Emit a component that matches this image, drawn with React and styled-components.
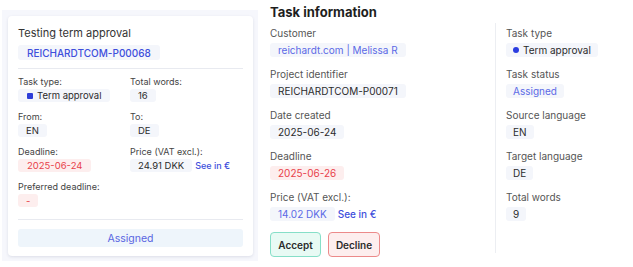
import React from "react";
import styled, { createGlobalStyle } from "styled-components";

const GlobalStyle = createGlobalStyle`
  body {
    margin: 0;
    background: #fff;
    font-family: "Inter", "Noto Sans", sans-serif;
    color: #2b2b2b;
  }
`;

const Page = styled.div`
  width: 633px;
  height: 267px;
  display: flex;
  align-items: flex-start;
  padding: 10px 0 0 2px;
  box-sizing: border-box;
`;

const Backdrop = styled.div`
  width: 256px;
  height: 251px;
  background: #f6f7fc;
  padding: 6px 5px 5px 6px;
  box-sizing: border-box;
`;

const Card = styled.div`
  height: 100%;
  background: #fff;
  border-radius: 4px;
  box-shadow: 0 1px 3px rgba(40, 50, 90, 0.12);
  padding: 9px 10px 0 10px;
  box-sizing: border-box;
  display: flex;
  flex-direction: column;
`;

const CardTitle = styled.div`
  font-size: 11px;
  line-height: 16px;
  color: #333;
`;

const Chip = styled.span`
  display: inline-flex;
  align-items: center;
  gap: 4px;
  align-self: flex-start;
  height: ${(p) => p.$h || 13}px;
  padding: 0 ${(p) => p.$px || 9}px;
  border-radius: 3px;
  font-size: ${(p) => p.$fs || 9.5}px;
  background: ${(p) => (p.$tone === "red" ? "#fdeeee" : "#f4f6fb")};
  color: ${(p) =>
    p.$tone === "red"
      ? "#e8414a"
      : p.$tone === "blue"
      ? "#3e4fdc"
      : p.$tone === "soft"
      ? "#5b6ae6"
      : "#2b2b2b"};
  font-weight: ${(p) => (p.$bold ? 500 : 400)};
  white-space: nowrap;
`;

const Rule = styled.div`
  height: 1px;
  background: #e8eaf0;
  margin: ${(p) => p.$m || "8px 0"};
`;

const FieldGrid = styled.div`
  display: grid;
  grid-template-columns: 112px 1fr;
  row-gap: 8px;
`;

const Field = styled.div`
  display: flex;
  flex-direction: column;
  gap: 1px;
`;

const SmallLabel = styled.div`
  font-size: 9px;
  line-height: 13px;
  color: #444;
`;

const Inline = styled.div`
  display: flex;
  align-items: center;
  gap: 3px;
`;

const Link = styled.span`
  font-size: ${(p) => p.$fs || 9}px;
  color: #3e4fdc;
  font-weight: 500;
`;

const Square = styled.span`
  width: 6px;
  height: 6px;
  border-radius: 1px;
  background: #2e3ed8;
`;

const Dot = styled.span`
  width: 6px;
  height: 6px;
  border-radius: 50%;
  background: #2b3de0;
`;

const StatusBar = styled.div`
  height: 18px;
  border-radius: 3px;
  background: #eef5fb;
  color: #5965e2;
  font-size: 10.5px;
  display: flex;
  align-items: center;
  justify-content: center;
`;

const Main = styled.div`
  margin-left: 12px;
  margin-top: -6px;
  display: flex;
  flex-direction: column;
`;

const Heading = styled.h2`
  margin: 0;
  font-size: 13px;
  line-height: 16px;
  font-weight: 700;
  color: #1e1e1e;
`;

const Columns = styled.div`
  display: flex;
  margin-top: 3px;
`;

const InfoCol = styled.div`
  width: 225px;
  display: flex;
  flex-direction: column;
  gap: 10px;
  padding-top: 3px;
`;

const SideCol = styled.div`
  border-left: 1px solid #eceef2;
  padding: 3px 0 0 10px;
  height: 230px;
  box-sizing: border-box;
  display: flex;
  flex-direction: column;
  gap: 10px;
`;

const Item = styled.div`
  display: flex;
  flex-direction: column;
  gap: 3px;
`;

const Label = styled.div`
  font-size: 10px;
  line-height: 14px;
  color: #555;
`;

const Actions = styled.div`
  display: flex;
  gap: 7px;
  margin-top: 1px;
`;

const ActionButton = styled.button`
  height: 25px;
  width: ${(p) => p.$w}px;
  border-radius: 4px;
  font-family: inherit;
  font-size: 10px;
  font-weight: 600;
  color: #2b2b2b;
  border: 1.5px solid ${(p) => (p.$kind === "ok" ? "#86dfc8" : "#ec8a8a")};
  background: ${(p) => (p.$kind === "ok" ? "#e8faf4" : "#fdeeee")};
  padding: 0;
`;

export default function App() {
  return (
    <>
      <GlobalStyle />
      <Page>
        <Backdrop>
          <Card>
            <CardTitle>Testing term approval</CardTitle>
            <Chip $tone="blue" $h={15} $fs={10} $bold style={{ marginTop: 4 }}>
              REICHARDTCOM-P00068
            </Chip>
            <Rule $m="8px 0 6px" />
            <FieldGrid>
              <Field>
                <SmallLabel>Task type:</SmallLabel>
                <Chip>
                  <Square />
                  Term approval
                </Chip>
              </Field>
              <Field>
                <SmallLabel>Total words:</SmallLabel>
                <Chip $px={8}>16</Chip>
              </Field>
              <Field>
                <SmallLabel>From:</SmallLabel>
                <Chip $px={8}>EN</Chip>
              </Field>
              <Field>
                <SmallLabel>To:</SmallLabel>
                <Chip $px={8}>DE</Chip>
              </Field>
              <Field>
                <SmallLabel>Deadline:</SmallLabel>
                <Chip $tone="red">2025-06-24</Chip>
              </Field>
              <Field>
                <SmallLabel>Price (VAT excl.):</SmallLabel>
                <Inline>
                  <Chip $px={8}>24.91 DKK</Chip>
                  <Link>See in €</Link>
                </Inline>
              </Field>
              <Field>
                <SmallLabel>Preferred deadline:</SmallLabel>
                <Chip $tone="red" $px={8}>-</Chip>
              </Field>
            </FieldGrid>
            <Rule $m="12px 0 9px" />
            <StatusBar>Assigned</StatusBar>
          </Card>
        </Backdrop>
        <Main>
          <Heading>Task information</Heading>
          <Columns>
            <InfoCol>
              <Item>
                <Label>Customer</Label>
                <Chip $tone="soft" $h={14} $fs={10} $px={8}>
                  reichardt.com | Melissa R
                </Chip>
              </Item>
              <Item>
                <Label>Project identifier</Label>
                <Chip $h={14} $fs={10} $px={8}>REICHARDTCOM-P00071</Chip>
              </Item>
              <Item>
                <Label>Date created</Label>
                <Chip $h={14} $fs={10} $px={8}>2025-06-24</Chip>
              </Item>
              <Item>
                <Label>Deadline</Label>
                <Chip $tone="red" $h={14} $fs={10} $px={8}>2025-06-26</Chip>
              </Item>
              <Item>
                <Label>Price (VAT excl.):</Label>
                <Inline>
                  <Chip $tone="soft" $h={14} $fs={10} $px={8}>14.02 DKK</Chip>
                  <Link $fs={10}>See in €</Link>
                </Inline>
              </Item>
              <Actions>
                <ActionButton $kind="ok" $w={51}>Accept</ActionButton>
                <ActionButton $kind="no" $w={52}>Decline</ActionButton>
              </Actions>
            </InfoCol>
            <SideCol>
              <Item>
                <Label>Task type</Label>
                <Chip $h={14} $fs={10} $px={7}>
                  <Dot />
                  Term approval
                </Chip>
              </Item>
              <Item>
                <Label>Task status</Label>
                <Chip $tone="soft" $h={14} $fs={10} $px={7}>Assigned</Chip>
              </Item>
              <Item>
                <Label>Source language</Label>
                <Chip $h={14} $fs={10} $px={7}>EN</Chip>
              </Item>
              <Item>
                <Label>Target language</Label>
                <Chip $h={14} $fs={10} $px={7}>DE</Chip>
              </Item>
              <Item>
                <Label>Total words</Label>
                <Chip $h={14} $fs={10} $px={7}>9</Chip>
              </Item>
            </SideCol>
          </Columns>
        </Main>
      </Page>
    </>
  );
}
